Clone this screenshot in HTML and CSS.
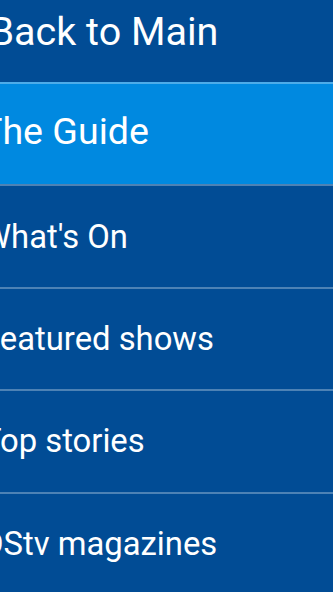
FILE: index.html
```html
<!DOCTYPE html>
<html lang="en">
<head>
<meta charset="utf-8">
<title>Menu</title>
<link rel="stylesheet" href="styles.css">
</head>
<body>
<nav class="menu">
  <a class="menu-back" href="#"><span class="label">Back to Main</span></a>
  <ul class="menu-list">
    <li class="menu-item is-active"><a href="#"><span class="label">The Guide</span></a></li>
    <li class="menu-item"><a href="#"><span class="label">What's On</span></a></li>
    <li class="menu-item"><a href="#"><span class="label">Featured shows</span></a></li>
    <li class="menu-item"><a href="#"><span class="label">Top stories</span></a></li>
    <li class="menu-item"><a href="#"><span class="label">DStv magazines</span></a></li>
  </ul>
</nav>
</body>
</html>
```
FILE: styles.css
```css
html, body {
  margin: 0;
  padding: 0;
  background: #014c95;
  overflow: hidden;
}
.menu {
  font-family: Roboto, "Liberation Sans", sans-serif;
  color: #fff;
  display: flex;
  flex-direction: column;
}
.menu a {
  color: #fff;
  text-decoration: none;
}
.menu-back {
  display: flex;
  align-items: flex-start;
  box-sizing: border-box;
  height: 82px;
  padding-top: 8px;
  font-size: 39.5px;
}
.menu-back .label {
  margin-left: -10.5px;
}
.menu-list {
  list-style: none;
  margin: 0;
  padding: 0;
}
.menu-item {
  border-top: 2px solid rgba(255, 255, 255, 0.3);
}
.menu-item a {
  display: flex;
  align-items: center;
  box-sizing: border-box;
  height: 100.4px;
  font-size: 32.8px;
}
.menu-item .label {
  margin-left: -18px;
}
.menu-item.is-active {
  background: #0089e0;
}
.menu-item.is-active a {
  font-size: 37.6px;
  padding-bottom: 6px;
}
.menu-item.is-active .label {
  margin-left: -20px;
}
.label {
  white-space: nowrap;
}
```
